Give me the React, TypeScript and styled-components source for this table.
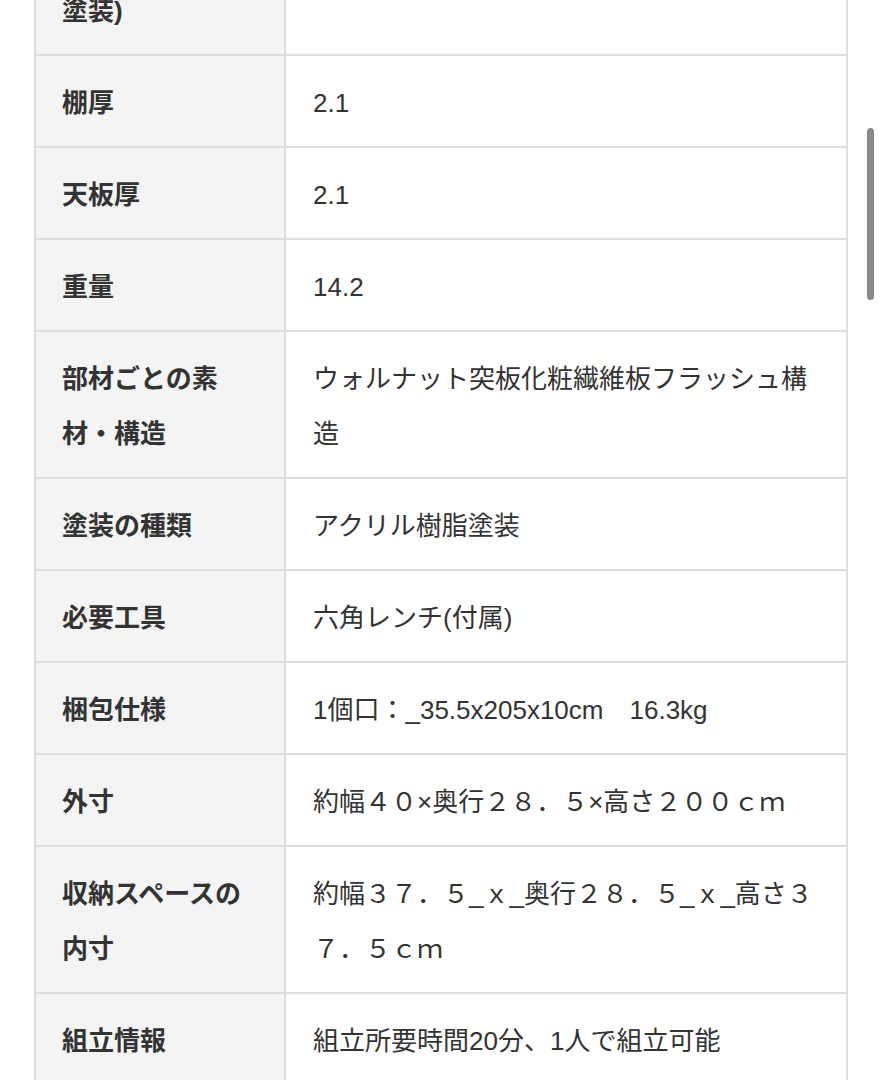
import React from "react";
import styled, { createGlobalStyle } from "styled-components";

const GlobalStyle = createGlobalStyle`
  html, body {
    margin: 0;
    padding: 0;
    background: #ffffff;
    overflow: hidden;
  }
  body {
    font-family: "Liberation Sans", "Noto Sans CJK JP", sans-serif;
    color: #333333;
  }
`;

const Page = styled.div`
  height: 1080px;
  overflow: hidden;
  padding-left: 34px;
`;

const SpecTable = styled.div`
  width: 812px;
  margin-top: -93px;
  border-left: 2px solid #dddddd;
  border-top: 2px solid #dddddd;
`;

const Row = styled.div`
  display: grid;
  grid-template-columns: 250px 562px;
  border-bottom: 2px solid #dddddd;
`;

const Label = styled.div`
  background: #f4f4f4;
  border-right: 2px solid #dddddd;
  padding: 20px 20px 15px 26px;
  font-size: 26px;
  line-height: 55px;
  font-weight: 700;
  color: #333333;
`;

const Value = styled.div`
  border-right: 2px solid #dddddd;
  padding: 20px 26px 15px 27px;
  font-size: 26px;
  line-height: 55px;
  font-weight: 400;
  color: #333333;
  word-break: break-all;
`;

const ScrollThumb = styled.div`
  position: fixed;
  top: 128px;
  right: 9px;
  width: 7px;
  height: 172px;
  border-radius: 4px;
  background: #8a8a8a;
`;

interface Spec {
  label: React.ReactNode;
  value: React.ReactNode;
}

const specs: Spec[] = [
  { label: <>仕上げ(ウレタン<br />塗装)</>, value: "ウレタン塗装" },
  { label: "棚厚", value: "2.1" },
  { label: "天板厚", value: "2.1" },
  { label: "重量", value: "14.2" },
  { label: <>部材ごとの素<br />材・構造</>, value: "ウォルナット突板化粧繊維板フラッシュ構造" },
  { label: "塗装の種類", value: "アクリル樹脂塗装" },
  { label: "必要工具", value: "六角レンチ(付属)" },
  { label: "梱包仕様", value: "1個口：_35.5x205x10cm\u300016.3kg" },
  { label: "外寸", value: "約幅４０×奥行２８．５×高さ２００ｃｍ" },
  { label: <>収納スペースの<br />内寸</>, value: "約幅３７．５_ｘ_奥行２８．５_ｘ_高さ３７．５ｃｍ" },
  { label: "組立情報", value: "組立所要時間20分、1人で組立可能" },
];

export default function App() {
  return (
    <>
      <GlobalStyle />
      <Page>
        <SpecTable>
          {specs.map((s, i) => (
            <Row key={i}>
              <Label>{s.label}</Label>
              <Value>{s.value}</Value>
            </Row>
          ))}
        </SpecTable>
      </Page>
      <ScrollThumb />
    </>
  );
}
